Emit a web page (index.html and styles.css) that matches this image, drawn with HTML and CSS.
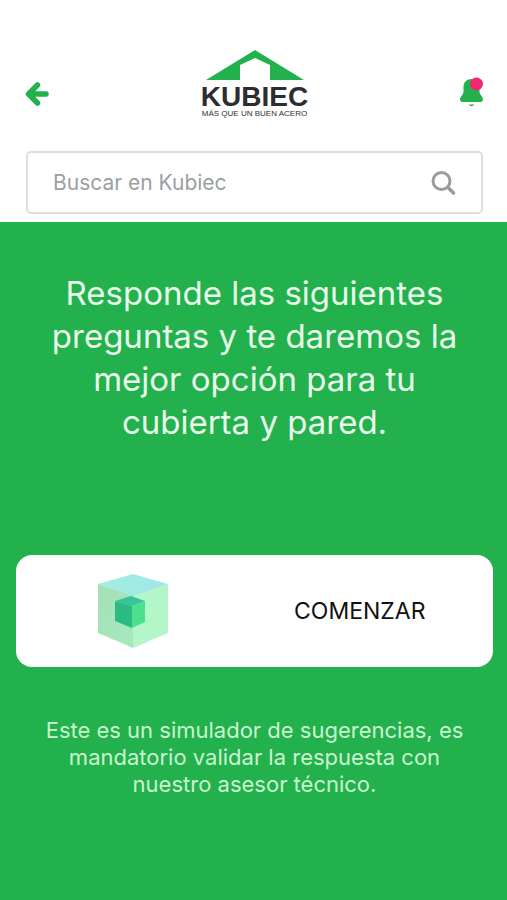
FILE: index.html
```html
<!DOCTYPE html>
<html lang="es">
<head>
<meta charset="utf-8">
<meta name="viewport" content="width=device-width, initial-scale=1">
<title>Kubiec</title>
<link rel="stylesheet" href="styles.css">
</head>
<body>
<header class="header">
  <div class="topbar">
    <button class="icon-button" type="button" aria-label="Volver">
      <svg width="26" height="26" viewBox="0 0 26 26" fill="none" stroke="#22b14c" stroke-width="5.500" stroke-linecap="round" stroke-linejoin="round"><path d="M13.500 4 4.500 13l9 9M5.500 13H22"/></svg>
    </button>
    <a class="logo" href="#">
      <svg class="logo-roof" width="98" height="30" viewBox="0 0 98 30"><path fill="#22b14c" d="M49 0 98 30H64V15L49 8 34 15v15H0Z"/></svg>
      <span class="logo-name">KUBIEC</span>
      <span class="logo-tagline">MÁS QUE UN BUEN ACERO</span>
    </a>
    <button class="icon-button" type="button" aria-label="Notificaciones">
      <svg width="26" height="30" viewBox="0 0 26 30"><path fill="#22b14c" d="M12.500 2C7 2 4.500 6 4.500 10.500v4C4.500 18 1 19.500 1 22.500 1 24 2 25 3.500 25h18c1.500 0 2.500-1 2.500-2.500 0-3-3.500-4.500-3.500-8v-4C20.500 6 18 2 12.500 2ZM9.500 27.500h6Q12.500 31 9.500 27.500Z"/><circle cx="17.500" cy="7" r="6.500" fill="#f4266f"/></svg>
    </button>
  </div>
  <form class="search">
    <input class="search-input" type="search" placeholder="Buscar en Kubiec" aria-label="Buscar en Kubiec">
    <button class="icon-button" type="submit" aria-label="Buscar">
      <svg width="26" height="26" viewBox="0 0 26 26" fill="none" stroke="#999b9d" stroke-linecap="round"><circle cx="11.500" cy="11" r="8.500" stroke-width="3"/><path stroke-width="3.500" d="m18 17.500 5.500 5.500"/></svg>
    </button>
  </form>
</header>
<main class="main">
  <h1 class="title">Responde las siguientes preguntas y te daremos la mejor opción para tu cubierta y pared.</h1>
  <button class="start" type="button">
    <svg class="cube" width="70" height="74" viewBox="0 0 70 74">
      <defs>
        <linearGradient id="top" x1="0" x2="1"><stop offset="0" stop-color="#a1efe2"/><stop offset="1" stop-color="#a0e6e7"/></linearGradient>
        <linearGradient id="left" x1="0" y1="0" x2="1" y2="1"><stop offset="0" stop-color="#a6dfb9"/><stop offset="1" stop-color="#a5eabd"/></linearGradient>
      </defs>
      <path fill="url(#left)" d="M0 10 35 21v53L0 59Z"/>
      <path fill="#b3f7c8" d="M70 10 35 21v53l35-15Z"/>
      <path fill="url(#top)" d="M35 0 70 10 35 22 0 10Z"/>
      <path fill="#2dba82" d="M17 27 34 32v22l-17-7Z"/>
      <path fill="#4ce08d" d="M47 27 34 32v22l13-6Z"/>
      <path fill="#38c39a" d="M33 22 47 27 34 32 17 27Z"/>
    </svg>
    <span class="start-label">COMENZAR</span>
  </button>
  <p class="note">Este es un simulador de sugerencias, es mandatorio validar la respuesta con nuestro asesor técnico.</p>
</main>
</body>
</html>
```
FILE: styles.css
```css
* {
  box-sizing: border-box;
}

body {
  margin: 0;
  min-height: 100vh;
  display: flex;
  flex-direction: column;
  font-family: Inter, "Liberation Sans", sans-serif;
  background: #fff;
}

button {
  font: inherit;
  color: inherit;
  border: 0;
  cursor: pointer;
}

.header {
  padding: 50px 24px 8px;
}

.topbar {
  display: grid;
  grid-template-columns: 1fr auto 1fr;
  align-items: end;
  margin: 0 -2px 32px 0;
}

.icon-button {
  display: flex;
  padding: 0;
  background: none;
}

.topbar .icon-button {
  margin-bottom: 12px;
}

.topbar .icon-button:last-child {
  justify-self: end;
}

.logo {
  display: flex;
  flex-direction: column;
  align-items: center;
  font-family: "Liberation Sans", sans-serif;
  color: #2d2d2f;
  text-decoration: none;
}

.logo-roof {
  margin-bottom: 5px;
}

.logo-name {
  font-size: 28px;
  line-height: 24px;
  font-weight: 700;
}

.logo-tagline {
  font-size: 8px;
  line-height: 10px;
}

.search {
  display: flex;
  align-items: center;
  margin: 0 0 0 2px;
  padding: 0 25px;
  height: 63px;
  border: 2px solid #dcdddf;
  border-radius: 5px;
}

.search-input {
  flex: 1;
  min-width: 0;
  padding: 0;
  border: 0;
  outline: 0;
  background: none;
  font: inherit;
  font-size: 21px;
}

.search-input::placeholder {
  color: #999fa3;
  opacity: 1;
}

.main {
  flex: 1;
  padding: 50px 14px 100px 16px;
  background: #22b14c;
}

.title {
  margin: 0 32px 111px;
  font-size: 33px;
  line-height: 43px;
  font-weight: 400;
  text-align: center;
  color: #e9fbea;
}

.start {
  display: grid;
  grid-template-columns: 1fr 1fr;
  align-items: center;
  justify-items: center;
  width: 100%;
  padding: 19px 20px 19px 4px;
  border-radius: 16px;
  background: #fff;
  color: #111;
}

.start-label {
  font-size: 23px;
  line-height: 28px;
}

.note {
  margin: 50px 28px 0;
  font-size: 22px;
  line-height: 27px;
  text-align: center;
  color: #c9f5cf;
}
```
